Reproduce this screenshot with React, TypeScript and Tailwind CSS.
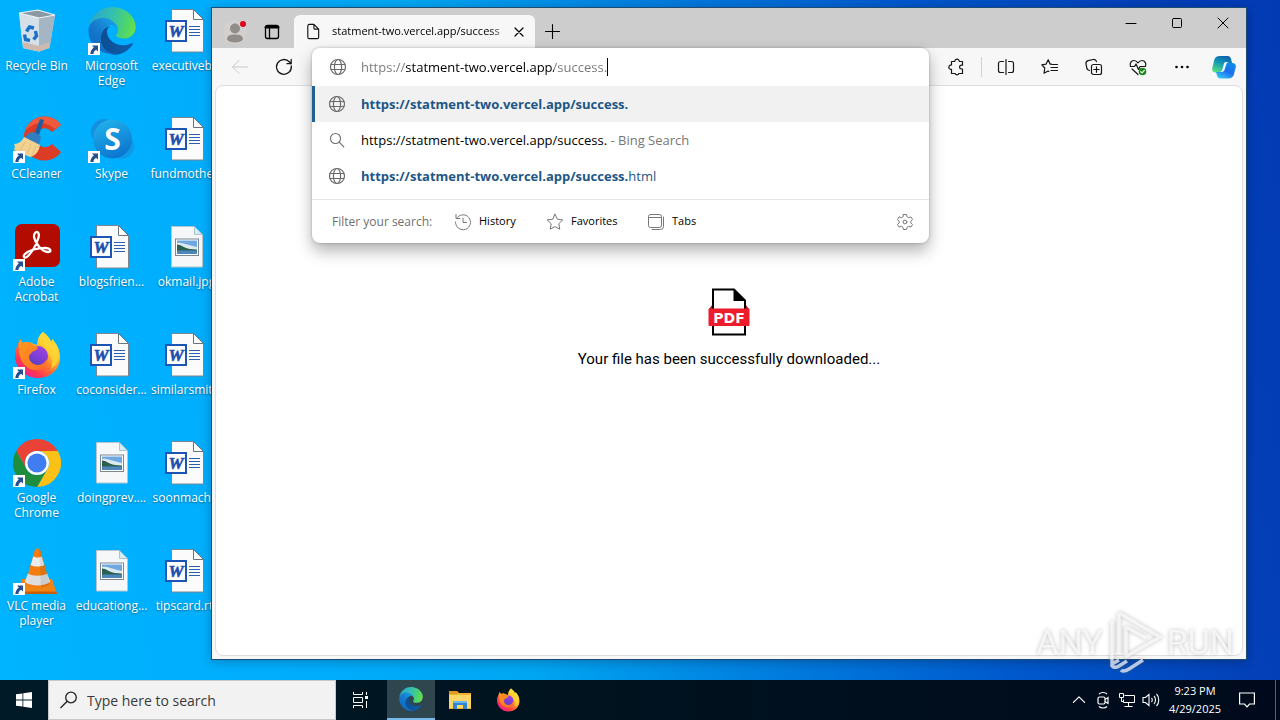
import React from "react";
import type { ReactNode } from "react";

/* ---------- product logos ---------- */

function EdgeLogo({ id, className }: { id: string; className: string }) {
  return (
    <svg viewBox="0 0 256 260" className={className} aria-hidden="true">
      <defs>
        <linearGradient id={`${id}a`} x1="0.1" y1="0.5" x2="1" y2="0.6">
          <stop offset="0" stopColor="#0c4f95" />
          <stop offset="1" stopColor="#0f5cab" />
        </linearGradient>
        <linearGradient id={`${id}b`} x1="0.9" y1="0.2" x2="0.3" y2="1">
          <stop offset="0" stopColor="#1b9de2" />
          <stop offset="0.5" stopColor="#1478cc" />
          <stop offset="1" stopColor="#0f6cc4" />
        </linearGradient>
        <linearGradient id={`${id}c`} x1="0" y1="0.4" x2="1" y2="0.6">
          <stop offset="0" stopColor="#2aa5cf" />
          <stop offset="0.45" stopColor="#34bfb0" />
          <stop offset="0.8" stopColor="#4cd56c" />
          <stop offset="1" stopColor="#66e04c" />
        </linearGradient>
      </defs>
      <path fill={`url(#${id}a)`} d="M235.68 195.46a93.73 93.73 0 0 1-10.54 4.71 101.87 101.87 0 0 1-35.9 6.46c-47.32 0-88.54-32.55-88.54-74.32A31.48 31.48 0 0 1 117.13 105c-42.8 1.8-53.8 46.4-53.8 72.53 0 73.88 68.09 81.37 82.76 81.37 7.91 0 19.84-2.3 27-4.56l1.31-.44a128.34 128.34 0 0 0 66.6-52.8 4 4 0 0 0-5.32-5.64z" />
      <path fill={`url(#${id}b)`} d="M105.73 241.42A79.2 79.2 0 0 1 83 220.08a80.72 80.72 0 0 1 29.5-120.41c3.12-1.47 8.45-4.13 15.54-4a32.35 32.35 0 0 1 25.69 13 31.88 31.88 0 0 1 6.36 18.66c0-.21 24.46-79.6-80-79.6-43.9 0-80 41.66-80 78.21a130.15 130.15 0 0 0 12.11 56 128 128 0 0 0 156.38 67.11 75.55 75.55 0 0 1-62.78-8z" />
      <path fill={`url(#${id}c)`} d="M152.29 148.86c-.81 1.05-3.3 2.5-3.3 5.66 0 2.61 1.7 5.12 4.72 7.23 14.38 10 41.49 8.68 41.56 8.68a59.56 59.56 0 0 0 30.27-8.35 61.38 61.38 0 0 0 30.43-52.88c.26-22.41-8-37.31-11.34-43.91C223.46 23.84 177.72 0 128 0A128 128 0 0 0 0 126.2c.48-36.54 36.8-66.05 80-66.05 3.5 0 23.46.34 42 10.07 16.34 8.58 24.9 18.94 30.85 29.21 6.18 10.67 7.28 24.15 7.28 29.52 0 5.37-2.74 13.33-7.84 19.91z" />
    </svg>
  );
}

function FirefoxLogo({ id, className }: { id: string; className: string }) {
  return (
    <svg viewBox="0 0 48 48" className={className} aria-hidden="true">
      <defs>
        <linearGradient id={`${id}a`} x1="0.85" y1="0.1" x2="0.2" y2="0.95">
          <stop offset="0" stopColor="#fff044" />
          <stop offset="0.3" stopColor="#ffc02c" />
          <stop offset="0.55" stopColor="#ff7a2e" />
          <stop offset="0.8" stopColor="#fb3750" />
          <stop offset="1" stopColor="#e8209a" />
        </linearGradient>
        <linearGradient id={`${id}b`} x1="0.7" y1="0" x2="0.3" y2="1">
          <stop offset="0" stopColor="#a240e6" />
          <stop offset="1" stopColor="#5b3fc4" />
        </linearGradient>
        <linearGradient id={`${id}c`} x1="0" y1="0" x2="1" y2="1">
          <stop offset="0" stopColor="#ff9a1e" />
          <stop offset="1" stopColor="#ff6a2a" />
        </linearGradient>
      </defs>
      <path fill={`url(#${id}a)`} d="M30 1c4 3 7 6 8 10 1-1 1-2 1-3 4 4 8 10 8 18 0 12-9 21-22 21S2 37 2 25c0-5 1-8 3-11 0-2 1-4 3-6 0 2 1 3 2 4 2-1 4-1 6-1l8 3c0-5 2-10 6-13z" />
      <circle cx="25" cy="25" r="10" fill={`url(#${id}b)`} />
      <path fill={`url(#${id}c)`} d="M6 13c0-2 1-4 2-5 0 2 1 3 2 4 3-2 8-1 10 2 1 1 3 1 5 2 0 3-4 4-6 5-1 2-3 2-3 5 0 4 4 8 9 8 4 0 7-3 9-6 1 6-4 11-11 11C12 39 5 29 6 13z" />
      <path fill="#ffd536" fillOpacity="0.8" d="M30 1c4 3 7 6 8 10 1-1 1-2 1-3 5 6 8 12 6 20-1 5-4 8-7 10 2-6 1-10-2-15-3-6-9-9-9-14 0-3 1-6 3-8z" />
    </svg>
  );
}

function ChromeLogo() {
  return (
    <svg viewBox="0 0 48 48" className="size-12" aria-hidden="true">
      <path fill="#ea4335" d="M3.2 12A24 24 0 0 1 44.8 12H24A12 12 0 0 0 13.6 30z" />
      <path fill="#fbc116" d="M44.8 12A24 24 0 0 1 24 48L34.4 30A12 12 0 0 0 24 12z" />
      <path fill="#1e8e3e" d="M24 48A24 24 0 0 1 3.2 12l10.4 18a12 12 0 0 0 20.8 0z" />
      <circle cx="24" cy="24" r="12" fill="#fff" />
      <circle cx="24" cy="24" r="9.6" fill="#3f7df0" />
    </svg>
  );
}

function RecycleBin() {
  return (
    <svg viewBox="0 0 48 48" className="size-12" aria-hidden="true">
      <path d="M6 6l36 2-5.500 33L26 44.500 10 41z" fill="#c3d2de" />
      <path d="M26 10l16-2-5.500 33L26 44.500z" fill="#a4b5c4" />
      <path d="M6 6l20 4v34.500L10 41z" fill="#d5e0e9" />
      <path d="M10 35l16 4 11-4-1 6-10 3.500L10 41z" fill="#cdb9ae" />
      <path d="M6 6l19-3 17 5-16 3z" fill="#8b98a4" stroke="#eef4f8" strokeWidth="1.200" />
      <path d="M13.500 24.500l3-4.500 4.500 1M22.500 24l1 5-3 3.500M17 33.500l-4.500-1-1-5" fill="none" stroke="#1673c9" strokeWidth="3.400" />
    </svg>
  );
}

function CCleanerLogo() {
  return (
    <svg viewBox="0 0 48 48" className="size-12" aria-hidden="true">
      <path d="M48 10C42 1 29-1 20 5 8 13 8 33 18 41c9 7 23 6 30-4l-9-8c-4 4-9 4-13 1-4-4-4-12 1-15 4-3 8-2 12 2z" fill="#dc3b26" />
      <path d="M48 10C42 1 29-1 20 5c-4 3-7 7-8 11 8-9 20-11 30-2z" fill="#ee5a3d" />
      <path d="M27 4l4 1-6 18-5-1z" fill="#1d5f9e" />
      <path d="M15 19c4-3 9-2 13 3l-2 8-15-7z" fill="#2f7fc0" />
      <path d="M11 22l16 8c-1 7-5 11-10 12L1 35c1-3 1-4 0-6 5 0 8-3 10-7z" fill="#f3d190" />
      <path d="M12 27L7 36M18 29l-4 10M23 31l-4 10" stroke="#dcb775" strokeWidth="0.800" />
    </svg>
  );
}

function SkypeLogo() {
  return (
    <svg viewBox="0 0 48 48" className="size-12" aria-hidden="true">
      <defs>
        <linearGradient id="skype" x1="0.3" y1="0" x2="0.7" y2="1">
          <stop offset="0" stopColor="#20b0ea" />
          <stop offset="1" stopColor="#0a72cf" />
        </linearGradient>
      </defs>
      <circle cx="16" cy="17" r="13" fill="#158fe0" />
      <circle cx="33" cy="31" r="13" fill="#0f9ae8" />
      <circle cx="24.500" cy="24" r="19.500" fill="url(#skype)" />
      <text x="24.500" y="34.500" textAnchor="middle" fontFamily="Open Sans, sans-serif" fontWeight="700" fontSize="30" fill="#fff">S</text>
    </svg>
  );
}

function AcrobatLogo() {
  return (
    <svg viewBox="0 0 48 48" className="size-12" aria-hidden="true">
      <rect x="2" y="1" width="45" height="43" rx="7" fill="#b30b00" />
      <path d="M22 10c3-3 5 1 3 6-2 6-6 13-10 17-3 3-6 1-3-2 4-4 13-6 20-6 6 0 7 4 3 4-6 0-13-9-14-15 0-2 0-3 1-4z" fill="none" stroke="#fff" strokeWidth="2.300" />
    </svg>
  );
}

function VlcLogo() {
  return (
    <svg viewBox="0 0 48 48" className="size-12" aria-hidden="true">
      <path d="M9 32h30l5 15H4z" fill="#f08414" />
      <path d="M4 44.500h39.500l.5 2.500H3.400z" fill="#c75f08" />
      <path d="M22 2.500c1-1.500 4-1.500 5 0L37 37c-4 5-21 5-25 0z" fill="#f47d12" />
      <path d="M20.300 9.500c2.500 1.500 5.900 1.500 8.400 0l2.600 8.500c-4 2-9.600 2-13.600 0z" fill="#ececec" />
      <path d="M14.900 26.500c5 3 14.200 3 19.200 0l3.200 8.500c-6 4.500-19.600 4.500-25.600 0z" fill="#dedede" />
      <path d="M26 1.500l1 1L37 37c-2 2-6 3-9 3.500z" fill="#000" fillOpacity="0.08" />
    </svg>
  );
}

function WordDocument() {
  return (
    <svg viewBox="0 0 48 48" className="size-12" aria-hidden="true">
      <path d="M8.500 2.500h22l10 10V45h-32z" fill="#fbfbfb" stroke="#7d8791" strokeWidth="1" />
      <path d="M30.500 2.500v10h10z" fill="#fff" stroke="#6b757f" strokeWidth="1" />
      <path d="M26 19.500h11M26 22.500h11M26 25.500h11M26 28.500h11" stroke="#2b5fae" strokeWidth="1.100" />
      <rect x="3" y="14" width="20" height="20" fill="#fff" stroke="#1d55b5" strokeWidth="2" />
      <text x="13" y="30" textAnchor="middle" fontFamily="Liberation Serif, serif" fontWeight="700" fontStyle="italic" fontSize="17" fill="#1d4fae" stroke="#1d4fae" strokeWidth="0.600">W</text>
    </svg>
  );
}

function ImageDocument() {
  return (
    <svg viewBox="0 0 48 48" className="size-12" aria-hidden="true">
      <path d="M8.500 3.500h23l8 8V44h-31z" fill="#f6f7f8" stroke="#b9c4cc" strokeWidth="1" />
      <path d="M31.500 3.500v8h8z" fill="#d4ecf6" stroke="#9db9c6" strokeWidth="0.800" />
      <rect x="12.500" y="16" width="23" height="16.500" fill="#fff" stroke="#7b8791" strokeWidth="1" />
      <rect x="14" y="17.500" width="20" height="8" fill="#6fa8e0" />
      <path d="M14 20c5-1 9 2 20 4v2H14z" fill="#dceaf0" />
      <path d="M14 21.500c4 0 6 3 13 4.500l7 .5V28H14z" fill="#2b5f4d" />
      <rect x="14" y="27.500" width="20" height="3.500" fill="#4d86bd" />
    </svg>
  );
}

function ShortcutArrow() {
  return (
    <svg viewBox="0 0 12 12" className="absolute bottom-0 left-0 size-3 bg-white" aria-hidden="true">
      <path d="M4 2.500h6v6L8 6.800C6.500 8 5.500 9 5.500 11H2.300C2.500 8 3.800 6.300 5.800 4.600z" fill="#24508f" />
    </svg>
  );
}

/* ---------- line icons ---------- */

type LineProps = { children: ReactNode; className?: string; width?: number };

function Line({ children, className = "size-5", width = 1 }: LineProps) {
  return (
    <svg viewBox="0 0 20 20" className={className} fill="none" stroke="currentColor" strokeWidth={width} strokeLinecap="round" strokeLinejoin="round" aria-hidden="true">
      {children}
    </svg>
  );
}

function GlobeIcon() {
  return (
    <Line className="size-5 shrink-0 text-[#6b6b6b]" width={1.2}>
      <circle cx="10" cy="10" r="7.500" />
      <ellipse cx="10" cy="10" rx="3.600" ry="7.500" />
      <path d="M3.200 7.500h13.600M3.200 12.500h13.600" />
    </Line>
  );
}

/* ---------- desktop ---------- */

type Shortcut = { name: string; icon: ReactNode; linked?: boolean };

const shortcuts: Shortcut[] = [
  { name: "Recycle Bin", icon: <RecycleBin /> },
  { name: "CCleaner", icon: <CCleanerLogo />, linked: true },
  { name: "Adobe Acrobat", icon: <AcrobatLogo />, linked: true },
  { name: "Firefox", icon: <FirefoxLogo id="ffd" className="size-12" />, linked: true },
  { name: "Google Chrome", icon: <ChromeLogo />, linked: true },
  { name: "VLC media player", icon: <VlcLogo />, linked: true },
  { name: "Microsoft Edge", icon: <EdgeLogo id="edd" className="size-12" />, linked: true },
  { name: "Skype", icon: <SkypeLogo />, linked: true },
  { name: "blogsfrien...", icon: <WordDocument /> },
  { name: "coconsider...", icon: <WordDocument /> },
  { name: "doingprev....", icon: <ImageDocument /> },
  { name: "educationg...", icon: <ImageDocument /> },
  { name: "executiveb...", icon: <WordDocument /> },
  { name: "fundmothe...", icon: <WordDocument /> },
  { name: "okmail.jpg", icon: <ImageDocument /> },
  { name: "similarsmit...", icon: <WordDocument /> },
  { name: "soonmach...", icon: <WordDocument /> },
  { name: "tipscard.rtf", icon: <WordDocument /> },
];

function DesktopIcons() {
  return (
    <div className="-ml-px grid w-max auto-cols-[75px] grid-flow-col grid-rows-[repeat(6,108px)]">
      {shortcuts.map((s) => (
        <button key={s.name} type="button" className="flex flex-col items-center justify-start gap-[3px] pt-[7px]">
          <span className="relative size-12">
            {s.icon}
            {s.linked && <ShortcutArrow />}
          </span>
          <span className="px-1 text-center text-[12px] leading-[15px] text-white [text-shadow:0_1px_2px_rgba(0,0,0,0.45)]">{s.name}</span>
        </button>
      ))}
    </div>
  );
}

/* ---------- browser ---------- */

function TabStrip() {
  return (
    <div className="flex h-10 bg-[#cdcdcd]">
      <button type="button" aria-label="Profile" className="relative ml-1 mt-2 flex w-[38px] items-center justify-center">
        <svg viewBox="0 0 24 24" className="size-6" aria-hidden="true">
          <circle cx="12" cy="12" r="12" fill="#d3d1cf" />
          <circle cx="12" cy="8.500" r="5" fill="#918d8a" />
          <path d="M4 19.500c0-4 3-5 8-5s8 1 8 5c-2 4-14 4-16 0z" fill="#918d8a" />
        </svg>
        <span className="absolute right-2 top-[5px] size-[6px] rounded-full bg-[#e3001b]" />
      </button>
      <button type="button" aria-label="Tab actions" className="mt-2 flex w-9 items-center justify-center text-black">
        <Line width={1.3}>
          <rect x="3.500" y="3.500" width="13" height="13" rx="2" />
          <path d="M4 5.200h12" strokeWidth="2.800" />
          <path d="M7.500 6v10" />
        </Line>
      </button>
      <div className="ml-1 mt-[7px] flex w-[241px] items-center rounded-t-md bg-[#f7f7f7] pl-3 pr-2">
        <svg viewBox="0 0 14 18" className="mr-3 h-[17px] w-[14px] shrink-0" fill="none" stroke="#111" strokeWidth="1.200" strokeLinejoin="round" aria-hidden="true">
          <path d="M3 1.500h5l5 5V15a1.500 1.500 0 0 1-1.500 1.500H3A1.500 1.500 0 0 1 1.500 15V3A1.500 1.500 0 0 1 3 1.500zM8 1.500v4A1 1 0 0 0 9 6.500h4" />
        </svg>
        <span className="min-w-0 flex-1 overflow-hidden whitespace-nowrap text-[11px] text-black [mask-image:linear-gradient(to_right,black_90%,transparent_104%)]">
          statment-two.vercel.app/success
        </span>
        <button type="button" aria-label="Close tab" className="ml-1 flex size-4 items-center justify-center">
          <Line className="size-4" width={1.5}>
            <path d="M5 5l10 10M15 5L5 15" />
          </Line>
        </button>
      </div>
      <button type="button" aria-label="New tab" className="mt-2 flex w-[34px] items-center justify-center">
        <Line width={1.1}>
          <path d="M3.500 9.500h14M10.500 2.500v14" />
        </Line>
      </button>
      <div className="ml-auto flex h-[30px]">
        <button type="button" aria-label="Minimize" className="flex w-[46px] items-center justify-center">
          <Line><path d="M5 10.500h10" /></Line>
        </button>
        <button type="button" aria-label="Maximize" className="flex w-[46px] items-center justify-center">
          <Line><rect x="5.500" y="5.500" width="9" height="9" rx="1" /></Line>
        </button>
        <button type="button" aria-label="Close" className="flex w-[46px] items-center justify-center">
          <Line><path d="M5 5l10 10M15 5L5 15" /></Line>
        </button>
      </div>
    </div>
  );
}

function Omnibox() {
  return (
    <div className="absolute inset-x-0 top-0 z-10 overflow-hidden rounded-lg bg-white shadow-[0_8px_16px_rgba(0,0,0,0.3),0_0_3px_rgba(0,0,0,0.25)]">
      <div className="flex h-[38px] items-center pl-4">
        <GlobeIcon />
        <input
          type="text"
          aria-label="Address"
          defaultValue="https://statment-two.vercel.app/success."
          className="ml-[13px] bg-[linear-gradient(to_right,#767676_45px,#000_45px,#000_193px,#767676_193px)] bg-clip-text pt-0.5 text-[13px] text-transparent outline-none [field-sizing:content]"
        />
        <span className="h-[18px] w-px bg-black" />
      </div>
      <ul>
        <li className="flex h-9 items-center border-l-[3px] border-[#1f5f92] bg-[#f1f1f1] pl-3">
          <GlobeIcon />
          <a href="#first" className="ml-[14px] pt-0.5 text-[13px] font-bold text-[#1d5687]">https://statment-two.vercel.app/success.</a>
        </li>
        <li className="flex h-9 items-center pl-[15px]">
          <Line className="size-5 shrink-0 text-[#6b6b6b]" width={1.1}>
            <circle cx="8.500" cy="8.500" r="5" />
            <path d="M12.200 12.200l4.600 4.600" />
          </Line>
          <a href="#second" className="ml-[14px] whitespace-pre pt-0.5 text-[13px] text-black">
            https://statment-two.vercel.app/success.<span className="text-[#767676]"> - Bing Search</span>
          </a>
        </li>
        <li className="flex h-9 items-center pl-[15px]">
          <GlobeIcon />
          <a href="#third" className="ml-[14px] pt-0.5 text-[13px] text-[#1d5687]">
            <b>https://statment-two.vercel.app/success.</b>html
          </a>
        </li>
      </ul>
      <div className="mt-[5px] flex h-[44px] items-center border-t border-[#e5e5e5] pl-5 pr-[14px]">
        <span className="w-[121px] text-[12px] text-[#6f6f6f]">Filter your search:</span>
        <button type="button" className="flex w-[92px] items-center gap-[6px] text-[11px]">
          <Line className="size-5 text-[#777]">
            <path d="M3.500 6.500A7.500 7.500 0 1 1 2.500 10M3 2.500v4h4M10 6v4.500h3.500" />
          </Line>
          History
        </button>
        <button type="button" className="flex w-[101px] items-center gap-[6px] text-[11px]">
          <Line className="size-5 text-[#777]">
            <path d="M10 2.200l2.400 5 5.400.7-4 3.800 1 5.500L10 14.600l-4.800 2.600 1-5.500-4-3.800 5.400-.7z" />
          </Line>
          Favorites
        </button>
        <button type="button" className="flex items-center gap-[6px] text-[11px]">
          <Line className="size-5 text-[#777]">
            <rect x="2.500" y="2.500" width="13" height="13" rx="2" />
            <path d="M2.500 5.500h13M17.500 5v9.500a3 3 0 0 1-3 3H6" />
          </Line>
          Tabs
        </button>
        <button type="button" aria-label="Search settings" className="ml-auto text-[#777]">
          <Line className="size-5">
            <path d="M8.400 2.500h3.200l.5 2.300 1.500.9 2.300-.8 1.600 2.500-1.700 1.700v1.800l1.700 1.700-1.600 2.500-2.300-.8-1.500.9-.5 2.300H8.400l-.5-2.300-1.500-.9-2.300.8-1.600-2.500 1.700-1.700V9.100L2.500 7.400l1.600-2.500 2.300.8 1.500-.9z" />
            <circle cx="10" cy="10" r="1.900" />
          </Line>
        </button>
      </div>
    </div>
  );
}

function ToolButton({ label, children }: { label: string; children: ReactNode }) {
  return (
    <button type="button" aria-label={label} className="flex h-full w-11 items-center justify-center text-[#161616]">
      {children}
    </button>
  );
}

function Toolbar() {
  return (
    <div className="flex h-[37px] bg-[#f7f7f7]">
      <button type="button" aria-label="Back" disabled className="ml-[6px] flex w-11 items-center justify-center text-[#c9c9c9]">
        <Line><path d="M2.500 10h15M9 3.500L2.500 10 9 16.500" /></Line>
      </button>
      <ToolButton label="Refresh">
        <Line width={1.3}>
          <path d="M17.300 9A7.400 7.400 0 1 1 15.500 5l1.500 1.700M17.200 2.500v4.200h-4.200" />
        </Line>
      </ToolButton>
      <div className="relative ml-[6px] min-w-0 flex-1">
        <Omnibox />
      </div>
      <div className="flex items-center pl-[6px] pr-[2px]">
        <ToolButton label="Extensions">
          <Line width={1.2}>
            <path d="M4.500 4.500h3.200a2.300 2.300 0 1 1 4.600 0h3.200v3.700h-1a1.900 1.900 0 1 0 0 3.800h1v4.500h-3.600a2 2 0 0 1-3.800 0H4.500v-4.200a2.200 2.200 0 1 1 0-4.300z" />
          </Line>
        </ToolButton>
        <span className="mx-[2px] h-5 w-px bg-[#d2d2d2]" />
        <ToolButton label="Split screen">
          <Line width={1.2}>
            <path d="M7.500 4.500h-3a2 2 0 0 0-2 2v7a2 2 0 0 0 2 2h3M12.500 4.500h3a2 2 0 0 1 2 2v7a2 2 0 0 1-2 2h-3M10 2.500v15" />
          </Line>
        </ToolButton>
        <ToolButton label="Favorites">
          <Line width={1.2}>
            <path d="M11.500 7.200h-1.300L8.200 2.700 6 7.200l-4.200.6 3 3.200-.8 5.200 4-2.200.8.4M12 7.500h5.500M11 10.500h6.500M11 13.500h6.500" />
          </Line>
        </ToolButton>
        <ToolButton label="Collections">
          <Line width={1.2}>
            <rect x="7.500" y="7.500" width="10" height="10" rx="2" />
            <path d="M12.500 9.800v5.400M9.800 12.500h5.400M5.500 13.500L4.300 13a3 3 0 0 1-1.500-2L2 7a3 3 0 0 1 2.200-3.400l5-1.100a3 3 0 0 1 3.300 2.200" />
          </Line>
        </ToolButton>
        <ToolButton label="Browser essentials">
          <Line width={1.2}>
            <path d="M2.500 9.200C1.500 6.500 3 3.500 6 3.500c2 0 3 1 4 2.300 1-1.300 2-2.300 4-2.300 3 0 4.500 3 3.500 5.700M2.500 9.500h4L8 7l2.500 5.500L12 9.500h5M4 12l6 5.500" />
            <circle cx="14.500" cy="14.500" r="3.800" fill="#178717" stroke="none" />
            <path d="M12.800 14.700l1.300 1.200 2.200-2.500" stroke="#fff" />
          </Line>
        </ToolButton>
        <ToolButton label="Settings and more">
          <svg viewBox="0 0 20 20" className="size-5" aria-hidden="true">
            <circle cx="4.500" cy="10" r="1.300" />
            <circle cx="10" cy="10" r="1.300" />
            <circle cx="15.500" cy="10" r="1.300" />
          </svg>
        </ToolButton>
        <button type="button" aria-label="Copilot" className="flex w-10 items-center justify-center">
          <svg viewBox="0 0 24 24" className="size-6" aria-hidden="true">
            <defs>
              <linearGradient id="cpA" x1="0.7" y1="0" x2="0.3" y2="1">
                <stop offset="0" stopColor="#0b5fae" />
                <stop offset="0.45" stopColor="#1398b8" />
                <stop offset="1" stopColor="#55dc80" />
              </linearGradient>
              <linearGradient id="cpB" x1="0.8" y1="0" x2="0.2" y2="1">
                <stop offset="0" stopColor="#0f8fe6" />
                <stop offset="0.5" stopColor="#1b6df0" />
                <stop offset="1" stopColor="#35c9f2" />
              </linearGradient>
            </defs>
            <path d="M7.500 1h8c2 0 3 1.200 3.500 3l1.200 4.500h-4c-1.800 0-2.700 1-3.200 2.700l-1.300 4.300c-.4 1.300-1.400 2-2.700 2H3.500c-2.800 0-3.800-2-3.200-4.500l2-8.300C3 2.300 5 1 7.500 1z" fill="url(#cpA)" />
            <path d="M16.500 23.500h-8c-2 0-3-1.200-3.500-3L4 17h4c1.800 0 2.700-1 3.200-2.700L12.500 10c.4-1.300 1.400-2 2.700-2h5.300c2.800 0 3.800 2 3.200 4.500l-2 7.500c-.7 2.200-2.700 3.500-5.200 3.500z" fill="url(#cpB)" />
            <path d="M14 7h2.500c-1.500.5-2 1.500-2.400 2.900l-1.400 4.600c-.5 1.600-1.400 2.500-3.200 2.500H8c1.300-.3 1.900-1.200 2.300-2.500l1.300-4.500C12 8 12.500 7 14 7z" fill="#eefaff" />
          </svg>
        </button>
      </div>
    </div>
  );
}

function BrowserWindow() {
  return (
    <section aria-label="Browser" className="absolute bottom-[20px] left-[211px] right-[33px] top-[7px] flex flex-col border border-[#1c4c74] bg-[#f7f7f7] shadow-[0_2px_10px_rgba(0,0,0,0.25)]">
      <TabStrip />
      <Toolbar />
      <main className="mx-[3px] mb-[3px] flex flex-1 flex-col items-center rounded-lg border border-[#dedede] bg-white pt-[202px]">
        <svg viewBox="0 0 42 48" className="h-12 w-[42px]" aria-hidden="true">
          <path d="M1 21l4-5v5zM41 21l-4-5v5z" fill="#a8121a" />
          <path d="M5 1.500h21l11 11V46.500H5z" fill="#fff" stroke="#000" strokeWidth="2" />
          <path d="M25.500 1v12H38z" fill="#000" />
          <rect x="0.500" y="20.500" width="41" height="17.500" rx="1" fill="#ec1c2a" />
          <text x="21" y="34.500" textAnchor="middle" fontFamily="DejaVu Sans, sans-serif" fontWeight="700" fontSize="14" fill="#fff">PDF</text>
        </svg>
        <p className="mt-[11px] font-[Roboto,sans-serif] text-[15px] leading-6 text-black">Your file has been successfully downloaded...</p>
      </main>
    </section>
  );
}

function Watermark() {
  return (
    <div className="pointer-events-none absolute bottom-[6px] right-[46px] z-20 flex items-center gap-1 font-[Roboto,sans-serif] text-[34px] leading-[64px] text-white/70 [filter:drop-shadow(0_0_2px_rgba(90,90,90,0.55))]">
      <span>ANY</span>
      <svg viewBox="0 0 56 64" className="h-16 w-14" fill="none" stroke="#fff" strokeOpacity="0.7" strokeWidth="3.500" aria-hidden="true">
        <path d="M12 3v41M12 3l41 24-35 20M5 11v43l7-4M19 17v29M19 17l20 11M5 54c0 4 4 4 7 2l8-5M14 60c2 2 5 1 8-1l14-9" />
      </svg>
      <span>RUN</span>
    </div>
  );
}

/* ---------- taskbar ---------- */

function Taskbar() {
  return (
    <footer className="flex h-10 bg-[linear-gradient(to_right,#001a28,#00131f_45%,#000a1c)] text-white">
      <button type="button" aria-label="Start" className="flex w-12 items-center justify-center">
        <svg viewBox="0 0 16 16" className="size-4" fill="#fff" aria-hidden="true">
          <path d="M0 2.300l6.500-.9v6.200H0zM7.300 1.300L16 0v7.600H7.300zM0 8.400h6.500v6.200L0 13.700zM7.300 8.400H16V16l-8.700-1.200z" />
        </svg>
      </button>
      <label className="flex w-72 items-center gap-2 border border-[#c9c9c9] bg-[#f2f2f2] pl-[10px] text-[#222]">
        <svg viewBox="0 0 20 20" className="size-5 shrink-0" fill="none" stroke="#222" strokeWidth="1.300" aria-hidden="true">
          <circle cx="12" cy="7.500" r="5.300" />
          <path d="M8.200 11.300L1.500 18" />
        </svg>
        <input type="text" aria-label="Search" placeholder="Type here to search" className="min-w-0 flex-1 bg-transparent text-[14px] outline-none placeholder:text-[#3a3a3a]" />
      </label>
      <button type="button" aria-label="Task view" className="flex w-12 items-center justify-center">
        <svg viewBox="0 0 16 16" className="size-4" fill="none" stroke="#fff" aria-hidden="true">
          <path d="M1.500 0v2.500h9V0M1.500 5.500h9v5h-9zM1.500 16v-2.500h9V16M14.500 0v3M14.500 9v7" />
          <path d="M13 4h3v3h-3z" fill="#fff" stroke="none" />
        </svg>
      </button>
      <button type="button" aria-label="Microsoft Edge" className="ml-[3px] flex w-12 items-center justify-center border-b-2 border-[#76b9ed] bg-[#2f464f]">
        <EdgeLogo id="edt" className="size-6" />
      </button>
      <button type="button" aria-label="File Explorer" className="ml-px flex w-12 items-center justify-center">
        <svg viewBox="0 0 22 20" className="h-5 w-[22px]" aria-hidden="true">
          <path d="M0 1h8l2 2h12v16H0z" fill="#f0b52d" />
          <path d="M0 1h8l1 2-1 1H0z" fill="#e09a1c" />
          <path d="M0 5h22v13H0z" fill="#fcd667" />
          <path d="M4 11h14v8h-4v-4H8v4H4z" fill="#2f86cf" />
          <path d="M4 11h14v2H4z" fill="#69b5ec" />
        </svg>
      </button>
      <button type="button" aria-label="Firefox" className="flex w-12 items-center justify-center">
        <FirefoxLogo id="fft" className="size-6" />
      </button>
      <div className="ml-auto flex">
        <button type="button" aria-label="Show hidden icons" className="flex w-6 items-center justify-center">
          <Line className="size-4" width={1.5}><path d="M3 13l7-7 7 7" /></Line>
        </button>
        <button type="button" aria-label="Meet now" className="flex w-6 items-center justify-center">
          <svg viewBox="0 0 16 18" className="h-[18px] w-4" fill="none" stroke="#fff" strokeWidth="1.200" aria-hidden="true">
            <rect x="3" y="6" width="7" height="7" rx="1.500" />
            <path d="M10 8.500l3-2v6l-3-2M4 3c2-2 6-2 8 0M4 15.500c2 2 6 2 8 0" />
          </svg>
        </button>
        <button type="button" aria-label="Network" className="flex w-6 items-center justify-center">
          <svg viewBox="0 0 16 16" className="size-4" fill="none" stroke="#fff" aria-hidden="true">
            <path d="M5.500 3.500h10v7h-11v-3M9.500 10.500v4M5.500 14.500h8M.5 1.500h4v4h-4zM2.500 5.500v4h2" />
          </svg>
        </button>
        <button type="button" aria-label="Volume" className="flex w-6 items-center justify-center">
          <svg viewBox="0 0 18 16" className="h-4 w-[18px]" fill="none" stroke="#fff" strokeWidth="1.100" aria-hidden="true">
            <path d="M1 5.500h2.500L7 2.500v11L3.500 10.500H1zM9.500 6c1 1 1 3 0 4M12 4c2 2 2 6 0 8M14.500 2c3 3 3 9 0 12" />
          </svg>
        </button>
        <div className="flex w-16 flex-col items-center justify-center whitespace-nowrap text-[11px] leading-[18px]">
          <span>9:23 PM</span>
          <span>4/29/2025</span>
        </div>
        <button type="button" aria-label="Notifications" className="flex w-10 items-center justify-center">
          <svg viewBox="0 0 16 16" className="size-4" fill="none" stroke="#fff" strokeWidth="1.200" aria-hidden="true">
            <path d="M.6 1h14.800v11H10.500L8 14.800 5.500 12H.6z" />
          </svg>
        </button>
        <button type="button" aria-label="Show desktop" className="ml-2 w-[5px] border-l border-[#5b6470]" />
      </div>
    </footer>
  );
}

export default function App() {
  return (
    <div className="flex h-screen flex-col overflow-hidden font-['Open_Sans','Noto_Sans',sans-serif]">
      <div className="relative min-h-0 flex-1 bg-[linear-gradient(80deg,#00b4ff_0%,#00adfd_22%,#00a6f2_38%,#0080e0_54%,#0058cc_73%,#0440b8_90%,#023ab4_100%)]">
        <DesktopIcons />
        <BrowserWindow />
        <Watermark />
      </div>
      <Taskbar />
    </div>
  );
}
